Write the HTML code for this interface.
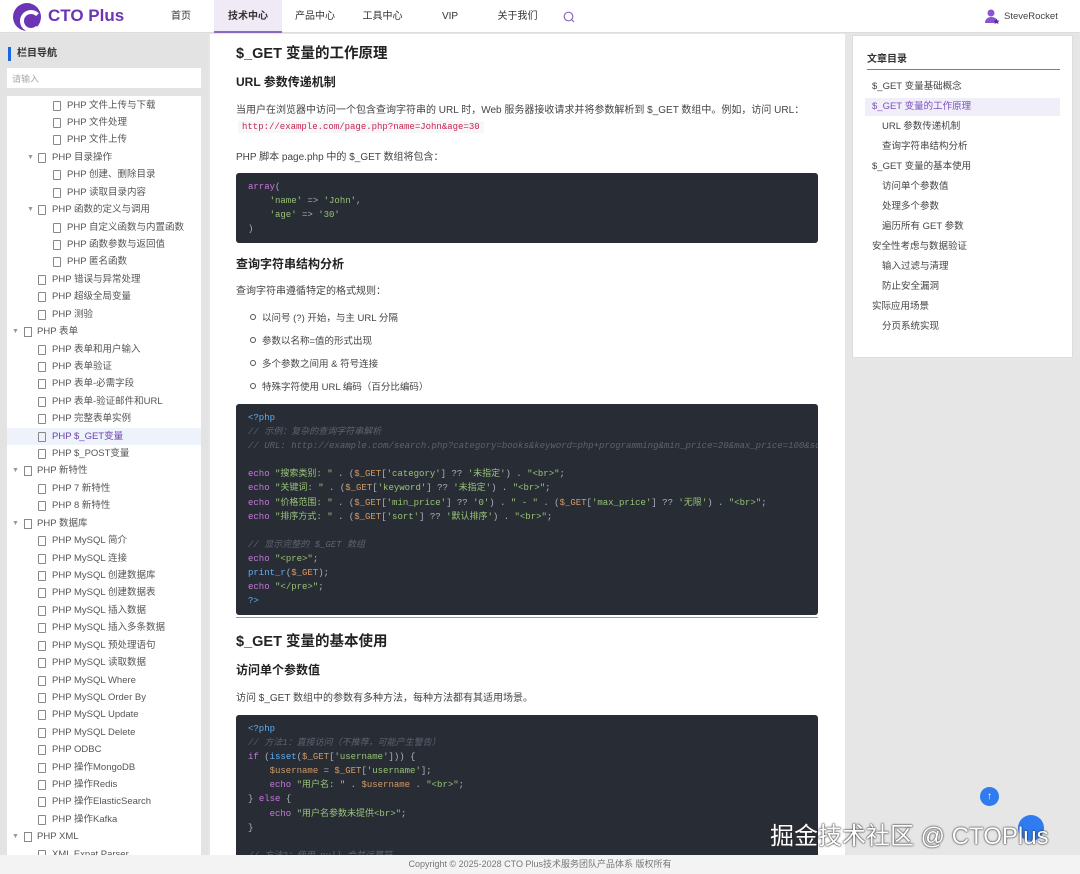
<!DOCTYPE html>
<html><head><meta charset="utf-8">
<style>
*{margin:0;padding:0;box-sizing:border-box}
body{width:1080px;height:874px;overflow:hidden;background:#e6e6e6;font-family:"Liberation Sans","Noto Sans CJK SC",sans-serif;color:#333;position:relative}
.hdr{position:absolute;left:0;top:0;width:1080px;height:33px;background:#fff;border-bottom:1px solid #ddd}
.logo{position:absolute;left:13px;top:3px;width:28px;height:28px;border-radius:50%;background:#6b35b5}
.logo:after{content:"";position:absolute;left:7px;top:7px;width:14px;height:14px;border-radius:50%;border:4px solid #fff;border-right-color:transparent}
.brand{position:absolute;left:48px;top:6px;font-size:17px;font-weight:bold;color:#6b35b5}
.nav{position:absolute;top:0;height:33px;line-height:33px;font-size:10px;color:#333;text-align:center}
.nav.act{background:#efeaf5;border-bottom:2px solid #8a6bbf;font-weight:bold}
.side{position:absolute;left:0;top:34px;width:208px;height:821px;background:#e3e3e3}
.stitle{position:absolute;left:8px;top:47px;border-left:3px solid #1a66e0;padding-left:6px;font-size:10px;font-weight:bold;height:14px;line-height:14px}
.inp{position:absolute;left:7px;top:68px;width:194px;height:20px;background:#fff;font-size:9px;color:#aaa;padding:4px 5px}
.tree{position:absolute;left:7px;top:96px;width:194px;height:759px;background:#fff;overflow:hidden}
.r{position:absolute;left:0;width:194px;height:17px;line-height:17px;font-size:9.5px;color:#555;white-space:nowrap}
.r i{position:absolute;top:4px;width:8px;height:10px;border:1px solid #888;border-radius:1px}
.r b{position:absolute;top:0;font-weight:normal;color:#999;font-size:7px}
.r.hl{background:#eef2fb;color:#6b40b0}
.main{position:absolute;left:210px;top:34px;width:635px;height:821px;background:#fff;overflow:hidden}
.main h2{position:absolute;left:26px;font-size:14.5px;font-weight:bold;color:#222}
.main h3{position:absolute;left:26px;font-size:12px;font-weight:bold;color:#222}
.p{position:absolute;left:26px;font-size:10px;color:#444;white-space:nowrap}
.code{position:absolute;left:26px;width:582px;background:#282c34;border-radius:3px;font-family:"Liberation Mono","Noto Sans CJK SC",monospace;font-size:9px;line-height:14.1px;color:#abb2bf;padding:7px 12px;white-space:pre;overflow:hidden}
.k{color:#c678dd}.s{color:#98c379}.c{color:#5c6370;font-style:italic}.b{color:#61afef}.v{color:#e06c75}.o{color:#d19a66}
.li{position:absolute;left:52px;font-size:9.5px;color:#444}
.li:before{content:"";position:absolute;left:-12px;top:4px;width:4px;height:4px;border:1px solid #555;border-radius:50%}
.toc{position:absolute;left:852px;top:35px;width:221px;height:323px;background:#fff;border:1px solid #ddd}
.toc .t{position:absolute;left:14px;top:14px;font-size:10px;font-weight:bold}
.toc .ln{position:absolute;left:14px;top:33px;width:193px;height:1px;background:#8a6bbf}
.ti{position:absolute;left:12px;width:195px;height:18px;line-height:18px;font-size:9.5px;color:#444;padding-left:7px}
.ti.s2{padding-left:17px}
.ti.on{background:#f0eef8;color:#7a50c0}
.ftr{position:absolute;left:0;top:855px;width:1080px;height:19px;background:#f3f3f3;font-size:9px;color:#777;text-align:center;line-height:19px}
</style></head><body>
<div class="hdr">
<div class="logo"></div><div class="brand">CTO Plus</div>
<div class="nav" style="left:160px;width:42px">首页</div>
<div class="nav act" style="left:214px;width:68px">技术中心</div>
<div class="nav" style="left:290px;width:50px">产品中心</div>
<div class="nav" style="left:355px;width:55px">工具中心</div>
<div class="nav" style="left:430px;width:40px">VIP</div>
<div class="nav" style="left:490px;width:55px">关于我们</div>
<svg style="position:absolute;left:563px;top:11px" width="12" height="12" viewBox="0 0 12 12"><circle cx="5.5" cy="5.5" r="4.3" fill="none" stroke="#8a6bbf" stroke-width="1.2"/><path d="M8.6 8.6l2.4 2.4" stroke="#8a6bbf" stroke-width="1.2"/></svg>
<svg style="position:absolute;left:984px;top:8px" width="16" height="16" viewBox="0 0 16 16"><circle cx="7" cy="5" r="3.5" fill="#8a55d0"/><path d="M1 15c0-4 3-6 6-6s5 1 6 3l-2 3z" fill="#8a55d0"/><path d="M12.5 10.5l1 2 2 .2-1.5 1.3.5 2-2-1-2 1 .5-2-1.5-1.3 2-.2z" fill="#5a2aa0"/></svg>
<div style="position:absolute;left:1004px;top:11px;font-size:9.5px;color:#444">SteveRocket</div>
</div>

<div class="side"></div>
<div class="stitle">栏目导航</div>
<div class="inp">请输入</div>
<div class="tree">
<div class="r" style="top:1px"><i style="left:46px"></i><span style="position:absolute;left:60px">PHP 文件上传与下载</span></div>
<div class="r" style="top:18px"><i style="left:46px"></i><span style="position:absolute;left:60px">PHP 文件处理</span></div>
<div class="r" style="top:35px"><i style="left:46px"></i><span style="position:absolute;left:60px">PHP 文件上传</span></div>
<div class="r" style="top:53px"><b style="left:20px">▼</b><i style="left:31px"></i><span style="position:absolute;left:45px">PHP 目录操作</span></div>
<div class="r" style="top:70px"><i style="left:46px"></i><span style="position:absolute;left:60px">PHP 创建、删除目录</span></div>
<div class="r" style="top:88px"><i style="left:46px"></i><span style="position:absolute;left:60px">PHP 读取目录内容</span></div>
<div class="r" style="top:105px"><b style="left:20px">▼</b><i style="left:31px"></i><span style="position:absolute;left:45px">PHP 函数的定义与调用</span></div>
<div class="r" style="top:123px"><i style="left:46px"></i><span style="position:absolute;left:60px">PHP 自定义函数与内置函数</span></div>
<div class="r" style="top:140px"><i style="left:46px"></i><span style="position:absolute;left:60px">PHP 函数参数与返回值</span></div>
<div class="r" style="top:157px"><i style="left:46px"></i><span style="position:absolute;left:60px">PHP 匿名函数</span></div>
<div class="r" style="top:175px"><i style="left:31px"></i><span style="position:absolute;left:45px">PHP 错误与异常处理</span></div>
<div class="r" style="top:192px"><i style="left:31px"></i><span style="position:absolute;left:45px">PHP 超级全局变量</span></div>
<div class="r" style="top:210px"><i style="left:31px"></i><span style="position:absolute;left:45px">PHP 测验</span></div>
<div class="r" style="top:227px"><b style="left:5px">▼</b><i style="left:17px;border-radius:0"></i><span style="position:absolute;left:30px">PHP 表单</span></div>
<div class="r" style="top:245px"><i style="left:31px"></i><span style="position:absolute;left:45px">PHP 表单和用户输入</span></div>
<div class="r" style="top:262px"><i style="left:31px"></i><span style="position:absolute;left:45px">PHP 表单验证</span></div>
<div class="r" style="top:279px"><i style="left:31px"></i><span style="position:absolute;left:45px">PHP 表单-必需字段</span></div>
<div class="r" style="top:297px"><i style="left:31px"></i><span style="position:absolute;left:45px">PHP 表单-验证邮件和URL</span></div>
<div class="r" style="top:314px"><i style="left:31px"></i><span style="position:absolute;left:45px">PHP 完整表单实例</span></div>
<div class="r hl" style="top:332px"><i style="left:31px"></i><span style="position:absolute;left:45px">PHP $_GET变量</span></div>
<div class="r" style="top:349px"><i style="left:31px"></i><span style="position:absolute;left:45px">PHP $_POST变量</span></div>
<div class="r" style="top:366px"><b style="left:5px">▼</b><i style="left:17px;border-radius:0"></i><span style="position:absolute;left:30px">PHP 新特性</span></div>
<div class="r" style="top:384px"><i style="left:31px"></i><span style="position:absolute;left:45px">PHP 7 新特性</span></div>
<div class="r" style="top:401px"><i style="left:31px"></i><span style="position:absolute;left:45px">PHP 8 新特性</span></div>
<div class="r" style="top:419px"><b style="left:5px">▼</b><i style="left:17px;border-radius:0"></i><span style="position:absolute;left:30px">PHP 数据库</span></div>
<div class="r" style="top:436px"><i style="left:31px"></i><span style="position:absolute;left:45px">PHP MySQL 简介</span></div>
<div class="r" style="top:454px"><i style="left:31px"></i><span style="position:absolute;left:45px">PHP MySQL 连接</span></div>
<div class="r" style="top:471px"><i style="left:31px"></i><span style="position:absolute;left:45px">PHP MySQL 创建数据库</span></div>
<div class="r" style="top:488px"><i style="left:31px"></i><span style="position:absolute;left:45px">PHP MySQL 创建数据表</span></div>
<div class="r" style="top:506px"><i style="left:31px"></i><span style="position:absolute;left:45px">PHP MySQL 插入数据</span></div>
<div class="r" style="top:523px"><i style="left:31px"></i><span style="position:absolute;left:45px">PHP MySQL 插入多条数据</span></div>
<div class="r" style="top:541px"><i style="left:31px"></i><span style="position:absolute;left:45px">PHP MySQL 预处理语句</span></div>
<div class="r" style="top:558px"><i style="left:31px"></i><span style="position:absolute;left:45px">PHP MySQL 读取数据</span></div>
<div class="r" style="top:576px"><i style="left:31px"></i><span style="position:absolute;left:45px">PHP MySQL Where</span></div>
<div class="r" style="top:593px"><i style="left:31px"></i><span style="position:absolute;left:45px">PHP MySQL Order By</span></div>
<div class="r" style="top:610px"><i style="left:31px"></i><span style="position:absolute;left:45px">PHP MySQL Update</span></div>
<div class="r" style="top:628px"><i style="left:31px"></i><span style="position:absolute;left:45px">PHP MySQL Delete</span></div>
<div class="r" style="top:645px"><i style="left:31px"></i><span style="position:absolute;left:45px">PHP ODBC</span></div>
<div class="r" style="top:663px"><i style="left:31px"></i><span style="position:absolute;left:45px">PHP 操作MongoDB</span></div>
<div class="r" style="top:680px"><i style="left:31px"></i><span style="position:absolute;left:45px">PHP 操作Redis</span></div>
<div class="r" style="top:697px"><i style="left:31px"></i><span style="position:absolute;left:45px">PHP 操作ElasticSearch</span></div>
<div class="r" style="top:715px"><i style="left:31px"></i><span style="position:absolute;left:45px">PHP 操作Kafka</span></div>
<div class="r" style="top:732px"><b style="left:5px">▼</b><i style="left:17px;border-radius:0"></i><span style="position:absolute;left:30px">PHP XML</span></div>
<div class="r" style="top:750px"><i style="left:31px"></i><span style="position:absolute;left:45px">XML Expat Parser</span></div>
</div>

<div class="main">
<h2 style="top:8px">$_GET 变量的工作原理</h2>
<h3 style="top:39px">URL 参数传递机制</h3>
<div class="p" style="top:67px">当用户在浏览器中访问一个包含查询字符串的 URL 时，Web 服务器接收请求并将参数解析到 $_GET 数组中。例如，访问 URL：</div>
<div class="p" style="top:87px;left:28px;background:#f7f7f9;color:#c7254e;font-family:'Liberation Mono',monospace;font-size:9px;padding:1px 4px">http://example.com/page.php?name=John&amp;age=30</div>
<div class="p" style="top:114px">PHP 脚本 page.php 中的 $_GET 数组将包含：</div>
<div class="code" style="top:139px;height:70px"><span class="k">array</span>(
    <span class="s">'name'</span> =&gt; <span class="s">'John'</span>,
    <span class="s">'age'</span> =&gt; <span class="s">'30'</span>
)</div>
<h3 style="top:221px">查询字符串结构分析</h3>
<div class="p" style="top:248px">查询字符串遵循特定的格式规则：</div>
<div class="li" style="top:276px">以问号 (?) 开始，与主 URL 分隔</div>
<div class="li" style="top:299px">参数以名称=值的形式出现</div>
<div class="li" style="top:322px">多个参数之间用 &amp; 符号连接</div>
<div class="li" style="top:345px">特殊字符使用 URL 编码（百分比编码）</div>
<div class="code" style="top:370px;height:211px"><span class="b">&lt;?php</span>
<span class="c">// 示例：复杂的查询字符串解析</span>
<span class="c">// URL: http://example.com/search.php?category=books&amp;keyword=php+programming&amp;min_price=20&amp;max_price=100&amp;sort=price</span>

<span class="k">echo</span> <span class="s">"搜索类别: "</span> . (<span class="o">$_GET</span>[<span class="s">'category'</span>] ?? <span class="s">'未指定'</span>) . <span class="s">"&lt;br&gt;"</span>;
<span class="k">echo</span> <span class="s">"关键词: "</span> . (<span class="o">$_GET</span>[<span class="s">'keyword'</span>] ?? <span class="s">'未指定'</span>) . <span class="s">"&lt;br&gt;"</span>;
<span class="k">echo</span> <span class="s">"价格范围: "</span> . (<span class="o">$_GET</span>[<span class="s">'min_price'</span>] ?? <span class="s">'0'</span>) . <span class="s">" - "</span> . (<span class="o">$_GET</span>[<span class="s">'max_price'</span>] ?? <span class="s">'无限'</span>) . <span class="s">"&lt;br&gt;"</span>;
<span class="k">echo</span> <span class="s">"排序方式: "</span> . (<span class="o">$_GET</span>[<span class="s">'sort'</span>] ?? <span class="s">'默认排序'</span>) . <span class="s">"&lt;br&gt;"</span>;

<span class="c">// 显示完整的 $_GET 数组</span>
<span class="k">echo</span> <span class="s">"&lt;pre&gt;"</span>;
<span class="b">print_r</span>(<span class="o">$_GET</span>);
<span class="k">echo</span> <span class="s">"&lt;/pre&gt;"</span>;
<span class="b">?&gt;</span></div>
<div style="position:absolute;left:26px;top:583px;width:582px;height:1px;background:#999"></div>
<h2 style="top:596px">$_GET 变量的基本使用</h2>
<h3 style="top:627px">访问单个参数值</h3>
<div class="p" style="top:655px">访问 $_GET 数组中的参数有多种方法，每种方法都有其适用场景。</div>
<div class="code" style="top:681px;height:160px;border-radius:3px 3px 0 0"><span class="b">&lt;?php</span>
<span class="c">// 方法1：直接访问（不推荐，可能产生警告）</span>
<span class="k">if</span> (<span class="b">isset</span>(<span class="o">$_GET</span>[<span class="s">'username'</span>])) {
    <span class="o">$username</span> = <span class="o">$_GET</span>[<span class="s">'username'</span>];
    <span class="k">echo</span> <span class="s">"用户名: "</span> . <span class="o">$username</span> . <span class="s">"&lt;br&gt;"</span>;
} <span class="k">else</span> {
    <span class="k">echo</span> <span class="s">"用户名参数未提供&lt;br&gt;"</span>;
}

<span class="c">// 方法2：使用 null 合并运算符</span></div>
</div>

<div class="toc">
<div class="t">文章目录</div><div class="ln"></div>
<div class="ti" style="top:42px">$_GET 变量基础概念</div>
<div class="ti on" style="top:62px">$_GET 变量的工作原理</div>
<div class="ti s2" style="top:82px">URL 参数传递机制</div>
<div class="ti s2" style="top:102px">查询字符串结构分析</div>
<div class="ti" style="top:122px">$_GET 变量的基本使用</div>
<div class="ti s2" style="top:142px">访问单个参数值</div>
<div class="ti s2" style="top:162px">处理多个参数</div>
<div class="ti s2" style="top:182px">遍历所有 GET 参数</div>
<div class="ti" style="top:202px">安全性考虑与数据验证</div>
<div class="ti s2" style="top:222px">输入过滤与清理</div>
<div class="ti s2" style="top:242px">防止安全漏洞</div>
<div class="ti" style="top:262px">实际应用场景</div>
<div class="ti s2" style="top:282px">分页系统实现</div>
</div>

<div style="position:absolute;left:980px;top:787px;width:19px;height:19px;border-radius:50%;background:#2f7bef;color:#fff;font-size:10px;text-align:center;line-height:19px">↑</div>
<div style="position:absolute;left:1018px;top:815px;width:26px;height:26px;border-radius:50%;background:#2f7bef"></div>
<div style="position:absolute;left:770px;top:816px;font-size:24px;color:#fff;text-shadow:0 0 2px #333,0 0 1px #000;white-space:nowrap">掘金技术社区 @ CTOPlus</div>
<div class="ftr">Copyright © 2025-2028 CTO Plus技术服务团队产品体系 版权所有</div>
</body></html>
